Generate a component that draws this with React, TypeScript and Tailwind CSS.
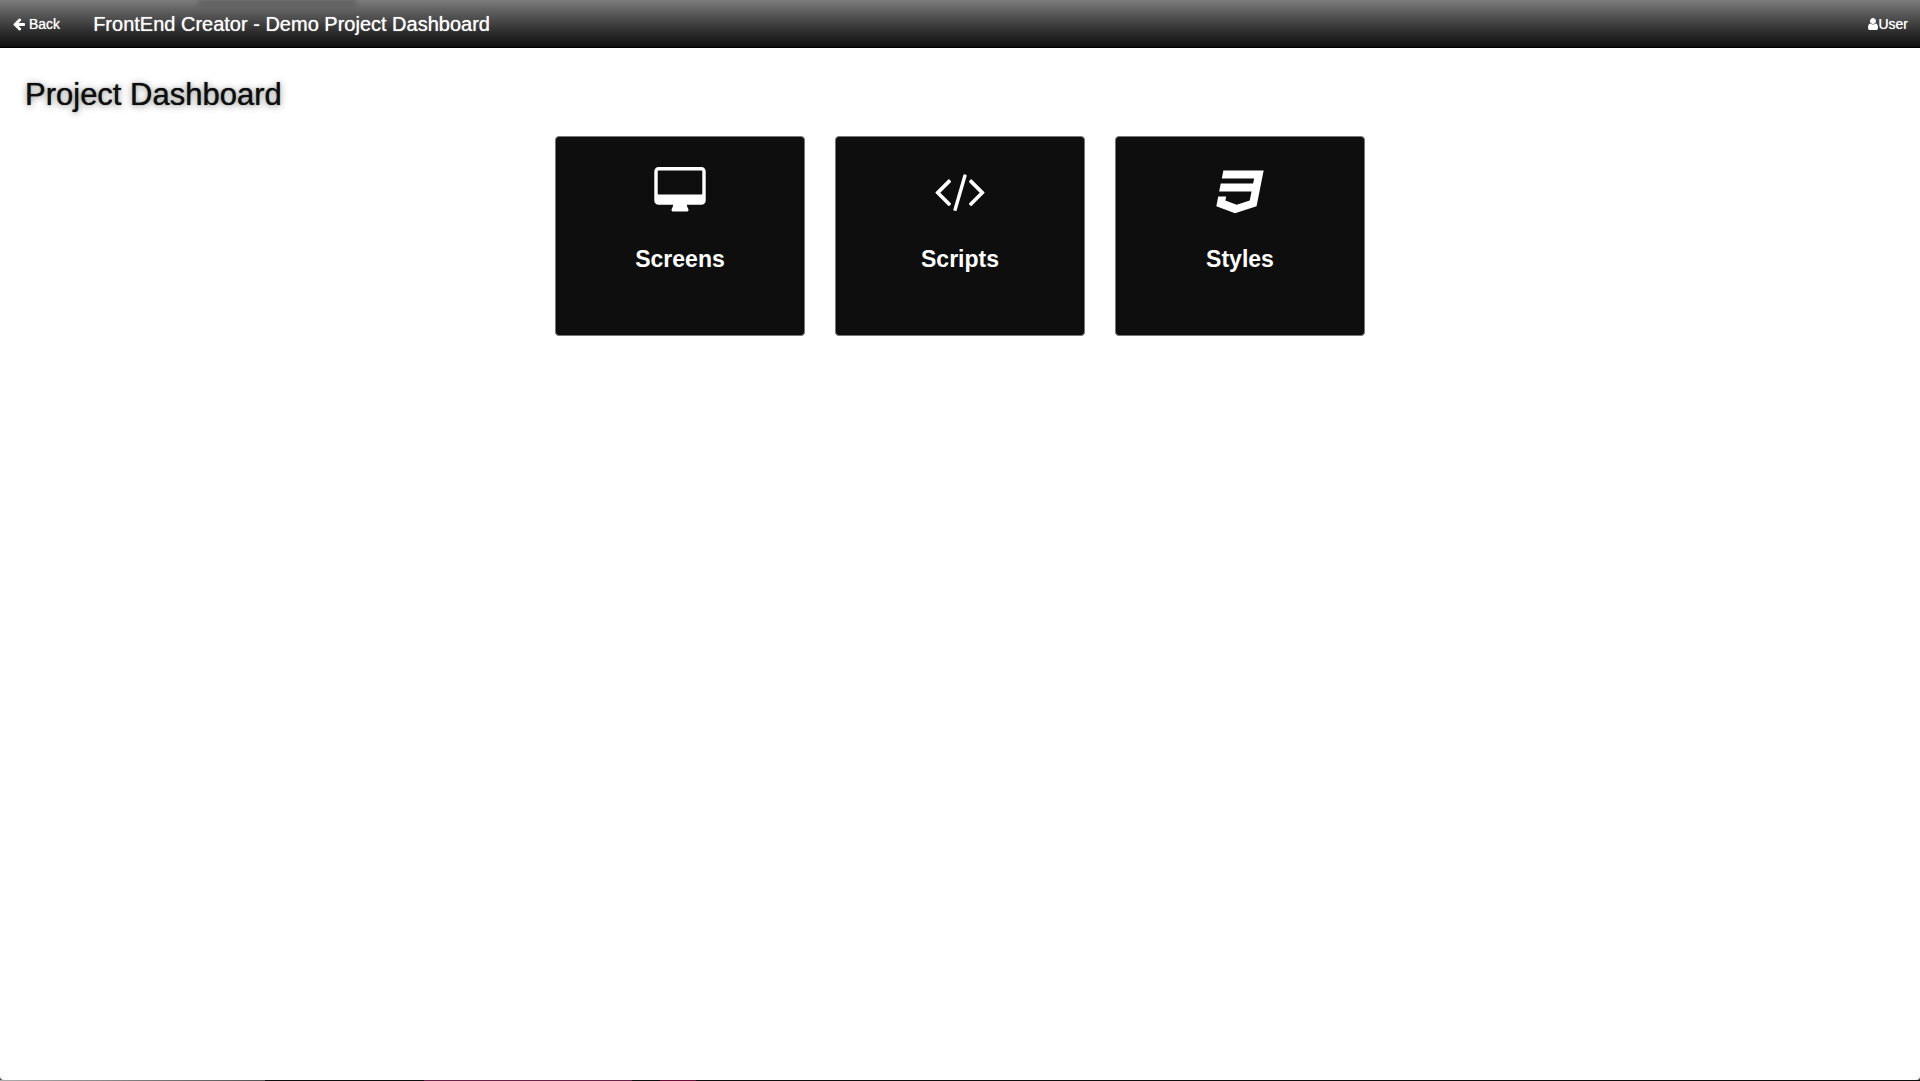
import type { ReactNode } from "react";

const paths = {
  back: "M1664 896v128q0 53-32.5 90.5t-84.5 37.5h-704l293 294q38 36 38 90t-38 90l-75 76q-37 37-90 37-52 0-91-37l-651-652q-37-37-37-90 0-52 37-91l651-650q38-38 91-38 52 0 90 38l75 74q38 38 38 91t-38 91l-293 293h704q52 0 84.5 37.5t32.5 90.5z",
  user: "M1536 1399q0 109-62.5 187t-150.5 78h-854q-88 0-150.5-78t-62.5-187q0-85 8.5-160.5t31.5-152 58.5-131 94-89 134.5-34.5q131 128 313 128t313-128q76 0 134.5 34.5t94 89 58.5 131 31.5 152 8.5 160.5zm-256-887q0 159-112.5 271.5t-271.5 112.5-271.5-112.5-112.5-271.5 112.5-271.5 271.5-112.5 271.5 112.5 112.5 271.5z",
  screens:
    "M1792 992v-832q0-13-9.5-22.5t-22.5-9.5h-1600q-13 0-22.5 9.5t-9.5 22.5v832q0 13 9.5 22.5t22.5 9.5h1600q13 0 22.5-9.5t9.5-22.5zm128-832v1088q0 66-47 113t-113 47h-544q0 37 16 77.5t32 71 16 43.5q0 26-19 45t-45 19h-512q-26 0-45-19t-19-45q0-14 16-44t32-70 16-78h-544q-66 0-113-47t-47-113v-1088q0-66 47-113t113-47h1600q66 0 113 47t47 113z",
  scripts:
    "M617 1399l-50 50q-10 10-23 10t-23-10l-466-466q-10-10-10-23t10-23l466-466q10-10 23-10t23 10l50 50q10 10 10 23t-10 23l-393 393 393 393q10 10 10 23t-10 23zm591-1067l-373 1291q-4 13-15.5 19.5t-23.5 2.5l-62-17q-13-4-19.5-15.5t-2.5-24.5l373-1291q4-13 15.5-19.5t23.5-2.5l62 17q13 4 19.5 15.5t2.5 24.5zm657 651l-466 466q-10 10-23 10t-23-10l-50-50q-10-10-10-23t10-23l393-393-393-393q-10-10-10-23t10-23l50-50q10-10 23-10t23 10l466 466q10 10 10 23t-10 23z",
  styles:
    "M275 128h1505l-266 1333-804 267-698-267 71-356h297l-29 147 422 161 486-161 68-339h-1208l58-297h1209l38-191h-1208z",
};

function Icon({ d, box, className }: { d: string; box: string; className: string }) {
  return (
    <svg viewBox={box} fill="currentColor" aria-hidden="true" className={className}>
      <path d={d} />
    </svg>
  );
}

function Card({ label, children }: { label: string; children: ReactNode }) {
  return (
    <a
      href="#"
      className="flex h-[200px] w-[250px] flex-col items-center rounded border border-[#777777] bg-[#0e0e0e] pt-[30px] text-white"
    >
      {children}
      <h2 className="mt-8 text-[23px] leading-6 font-bold">{label}</h2>
    </a>
  );
}

export default function App() {
  return (
    <div className="flex min-h-screen flex-col bg-[#4a4a4a] font-['Liberation_Sans',Arial,sans-serif]">
      <div className="flex flex-1 flex-col rounded-b bg-white">
        <header className="relative flex h-12 items-center border-b border-black bg-linear-to-b from-[#7c7c7c] to-[#0e0e0e] px-3 text-white text-shadow-[0_0_1px_rgb(255_255_255/0.8)]">
          <div className="absolute top-0 left-[198px] h-2 w-[158px] bg-linear-to-b from-black/25 to-transparent blur-[2px]" />
          <a href="#" className="flex items-center gap-[3px] text-sm">
            <Icon d={paths.back} box="0 0 1792 1792" className="size-[14px]" />
            Back
          </a>
          <h1 className="ml-[33px] text-xl">FrontEnd Creator - Demo Project Dashboard</h1>
          <a href="#" className="ml-auto flex items-center text-sm">
            <Icon d={paths.user} box="256 0 1280 1792" className="h-[14px] w-[10px]" />
            User
          </a>
        </header>
        <main>
          <h2 className="px-[25px] pt-[29px] text-[31px] leading-9 text-[#0e0e0e] text-shadow-[0_0_1px_rgb(14_14_14/0.9),0_1px_7px_rgb(0_0_0/0.5)]">
            Project Dashboard
          </h2>
          <nav aria-label="Project sections" className="mt-[23px] flex flex-wrap justify-center gap-[30px]">
            <Card label="Screens">
              <Icon d={paths.screens} box="0 0 1920 1792" className="h-12 w-[52px]" />
            </Card>
            <Card label="Scripts">
              <Icon d={paths.scripts} box="0 0 1920 1792" className="h-12 w-[52px]" />
            </Card>
            <Card label="Styles">
              <Icon d={paths.styles} box="0 0 1792 1792" className="size-12" />
            </Card>
          </nav>
        </main>
      </div>
      <div className="flex h-px bg-[#0e0e0e]">
        <div className="w-[265px] bg-linear-to-r from-[#aaaaaa] to-[#555555]" />
        <div className="ml-[159px] w-[208px] bg-[#6a2348]" />
        <div className="ml-7 w-9 bg-[#6b0f38]" />
      </div>
    </div>
  );
}
